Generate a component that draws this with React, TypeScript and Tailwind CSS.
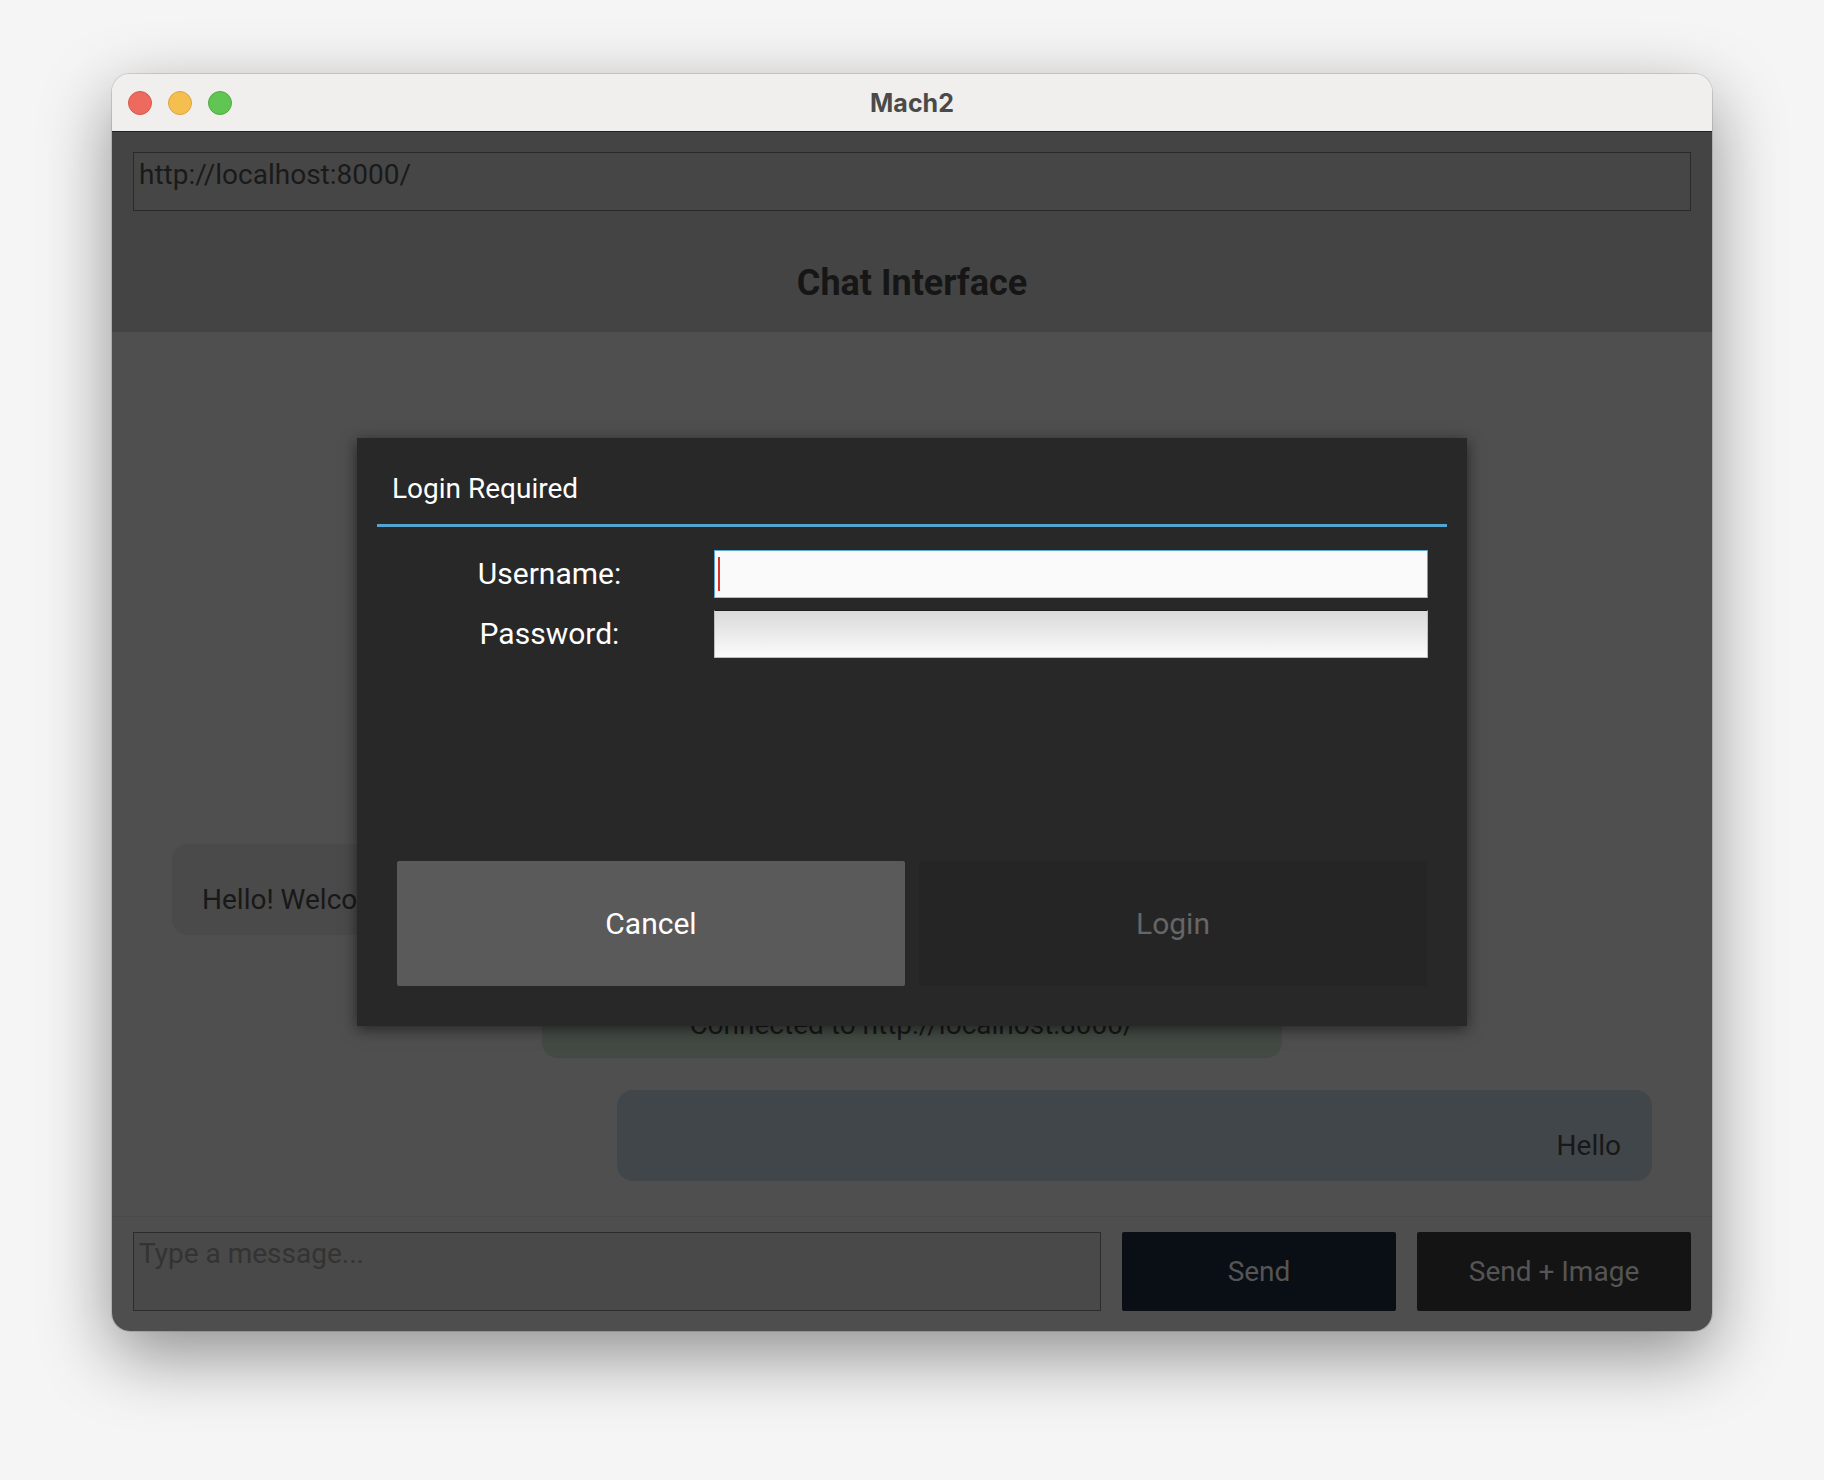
import React from 'react';

const font = { fontFamily: 'Roboto, "Noto Sans", sans-serif' };

const TrafficLights = () => (
  <div className="absolute left-[16px] top-0 h-full flex items-center gap-[16px]">
    <span className="w-[24px] h-[24px] rounded-full bg-[#ed6a5e] border border-[#d6574c]" />
    <span className="w-[24px] h-[24px] rounded-full bg-[#f5bf4f] border border-[#d9a53d]" />
    <span className="w-[24px] h-[24px] rounded-full bg-[#61c554] border border-[#4fa944]" />
  </div>
);

const LoginDialog = () => (
  <div className="absolute inset-0 flex items-center justify-center">
    <div className="w-[1110px] h-[588px] bg-[#282828] shadow-[0_3px_14px_rgba(0,0,0,0.55)] flex flex-col px-[20px]">
      <div className="pt-[34px] pl-[15px] text-[28px] leading-[33px] text-white">Login Required</div>
      <div className="mt-[19px] h-[3px] bg-[#52a5d0]" />

      <div className="mt-[23px] flex flex-col gap-[12px] pr-[19px]">
        <div className="flex items-center">
          <div className="w-[337px] pl-[8px] text-center text-[30px] text-white">Username:</div>
          <div className="flex-1 h-[48px] bg-[#fafafa] border border-[#5aa8d8] border-b-[#b9b9b9] flex items-center pl-[3px]">
            <span className="w-[2px] h-[34px] bg-[#d9342b]" />
          </div>
        </div>
        <div className="flex items-center">
          <div className="w-[337px] pl-[8px] text-center text-[30px] text-white">Password:</div>
          <div className="flex-1 h-[48px] bg-gradient-to-b from-[#dadada] to-[#fbfbfb] border border-[#bdbdbd] border-t-[#1e1e1e]" />
        </div>
      </div>

      <div className="flex-1" />

      <div className="flex gap-[14px] pl-[20px] pr-[20px] pb-[40px]">
        <button className="flex-1 h-[125px] bg-[#5a5a5a] text-white text-[30px] rounded-[2px]">Cancel</button>
        <button className="flex-1 h-[125px] bg-[#252525] text-[#666666] text-[30px] rounded-[2px]">Login</button>
      </div>
    </div>
  </div>
);

export default function App() {
  return (
    <div className="w-[1824px] h-[1480px] bg-[#f5f5f5] pt-[74px] pl-[112px]" style={font}>
      <div className="w-[1600px] h-[1257px] rounded-[18px] overflow-hidden flex flex-col shadow-[0_24px_70px_rgba(0,0,0,0.42),0_0_0_1px_rgba(0,0,0,0.12)]">
        {/* title bar */}
        <div className="relative h-[58px] shrink-0 bg-[#f0efed] border-b border-[#222222] flex items-center justify-center pt-[2px]">
          <TrafficLights />
          <span className="text-[25px] font-bold text-[#4a4a4a]" style={{ fontFamily: 'Inter, Roboto, sans-serif' }}>Mach2</span>
        </div>

        {/* body */}
        <div className="relative flex-1 flex flex-col">
          <div className="h-[200px] shrink-0 bg-[#444444] px-[21px] pt-[20px] flex flex-col">
            <div className="h-[59px] bg-[#464646] border border-[#2a2a2a] px-[5px] pt-[5px] text-[28px] text-[#1a1a1a] leading-[33px]">
              http://localhost:8000/
            </div>
            <div className="flex-1 flex items-center justify-center pt-[22px] text-[36px] font-bold text-[#161616]">
              Chat Interface
            </div>
          </div>

          <div className="flex-1 bg-[#4f4f4f] flex flex-col justify-end px-[60px] pb-[35px] gap-[32px]">
            <div className="self-start w-[620px] h-[91px] rounded-[16px] bg-[#4a4a4a] px-[30px] pt-[39px] text-[28px] leading-[33px] text-[#181818] whitespace-nowrap">
              Hello! Welcome to the chat server.
            </div>
            <div className="self-center w-[740px] h-[91px] rounded-[16px] bg-[#434a43] pt-[41px] text-center text-[28px] leading-[33px] text-[#181818]">
              Connected to http://localhost:8000/
            </div>
            <div className="self-end w-[1035px] h-[91px] rounded-[16px] bg-[#41464a] px-[31px] pt-[39px] text-right text-[28px] leading-[33px] text-[#181818]">
              Hello
            </div>
          </div>

          <div className="h-[115px] shrink-0 bg-[#4e4e4e] border-t border-[#4a4a4a] px-[21px] pt-[15px] pb-[20px] flex gap-[21px]">
            <div className="flex-1 bg-[#494949] border border-[#2c2c2c] px-[5px] pt-[4px] text-[28px] leading-[33px] text-[#333333]">
              Type a message...
            </div>
            <button className="w-[274px] bg-[#0a0f15] text-[#555555] text-[28px] rounded-[2px]">Send</button>
            <button className="w-[274px] bg-[#141414] text-[#555555] text-[28px] rounded-[2px]">Send + Image</button>
          </div>

          <LoginDialog />
        </div>
      </div>
    </div>
  );
}
